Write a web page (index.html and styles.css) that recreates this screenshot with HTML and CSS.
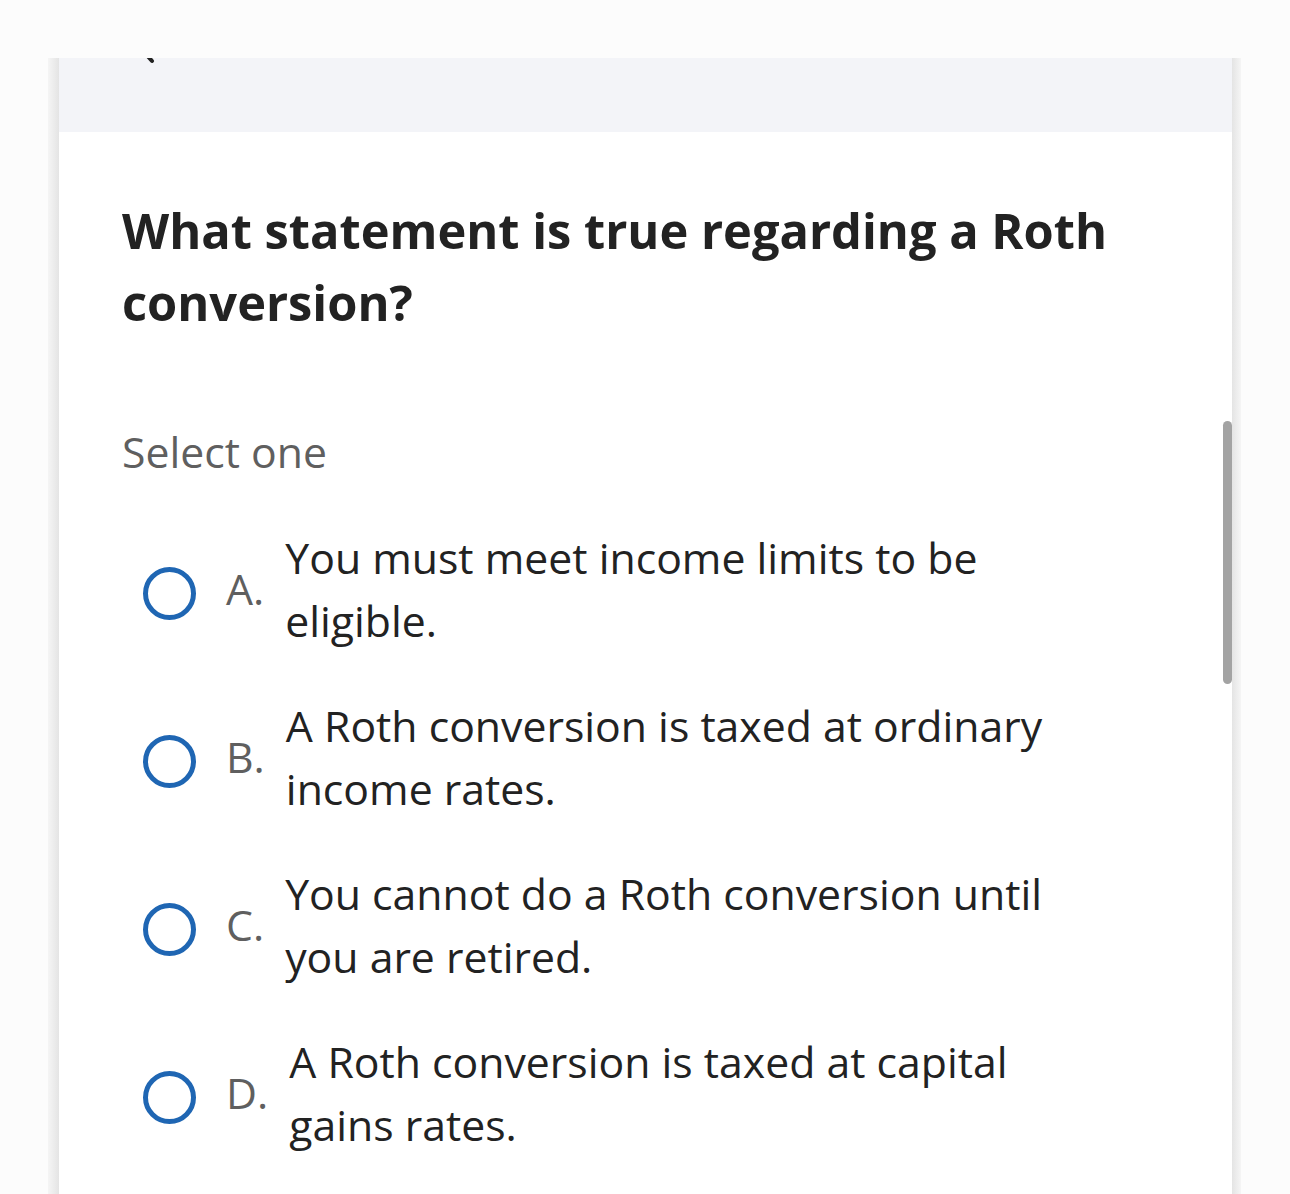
FILE: index.html
```html
<!DOCTYPE html>
<html lang="en">
<head>
<meta charset="utf-8">
<title>Question</title>
<link rel="stylesheet" href="styles.css">
</head>
<body>
<div class="frame">
  <div class="card">
    <div class="topband">
      <svg class="back" width="24" height="40" viewBox="0 0 24 40"><path d="M20 4 L6 20 L20 36" fill="none" stroke="#222" stroke-width="4" stroke-linecap="round" stroke-linejoin="round"/></svg>
    </div>
    <div class="content">
      <h1 class="question">What statement is true regarding a Roth conversion?</h1>
      <p class="hint">Select one</p>
      <ul class="options">
        <li class="option"><span class="radio"></span><span class="letter">A.</span><span class="text">You must meet income limits to be eligible.</span></li>
        <li class="option"><span class="radio"></span><span class="letter">B.</span><span class="text">A Roth conversion is taxed at ordinary income rates.</span></li>
        <li class="option"><span class="radio"></span><span class="letter">C.</span><span class="text">You cannot do a Roth conversion until you are retired.</span></li>
        <li class="option"><span class="radio"></span><span class="letter">D.</span><span class="text">A Roth conversion is taxed at capital gains rates.</span></li>
      </ul>
    </div>
    <div class="scrollbar"></div>
  </div>
</div>
</body>
</html>
```
FILE: styles.css
```css
html, body {
  margin: 0;
  padding: 0;
}
body {
  background: #fcfcfc;
  font-family: "Open Sans", "Noto Sans", sans-serif;
  color: #222;
  height: 1194px;
  overflow: hidden;
}
.frame {
  margin: 58px 49px 0 48px;
  padding: 0 9px 0 11px;
  height: 1136px;
  background: linear-gradient(to right, #f5f5f5 0, #e4e4e4 11px, transparent 11px, transparent calc(100% - 9px), #e4e4e4 calc(100% - 9px), #f5f5f5 100%);
}
.card {
  position: relative;
  background: #fff;
  height: 100%;
}
.topband {
  height: 74px;
  background: #f3f4f8;
  overflow: hidden;
  padding-left: 73px;
}
.back {
  display: block;
  margin-top: -33px;
}
.content {
  padding: 0 63px;
}
.question {
  margin: 62px 0 0;
  font-size: 48.8px;
  font-weight: 700;
  line-height: 72px;
  color: #222;
}
.hint {
  margin: 86px 0 0;
  font-size: 42.75px;
  line-height: 56px;
  color: #5f5f5f;
}
.options {
  list-style: none;
  margin: 46px 0 0;
  padding: 0 0 0 21px;
}
.option {
  display: flex;
  align-items: center;
  margin-bottom: 42px;
}
.radio {
  flex: none;
  width: 43px;
  height: 43px;
  border: 5px solid #1f66b3;
  border-radius: 50%;
  margin: 8px 30px 0 0;
}
.letter {
  flex: none;
  font-size: 42.75px;
  line-height: 56px;
  color: #5f5f5f;
  margin-right: 21px;
}
.text {
  font-size: 42.75px;
  line-height: 63px;
  color: #222;
  max-width: 810px;
}
.scrollbar {
  position: absolute;
  right: 0;
  top: 363px;
  width: 9px;
  height: 263px;
  border-radius: 5px;
  background: #a3a3a3;
}
```
